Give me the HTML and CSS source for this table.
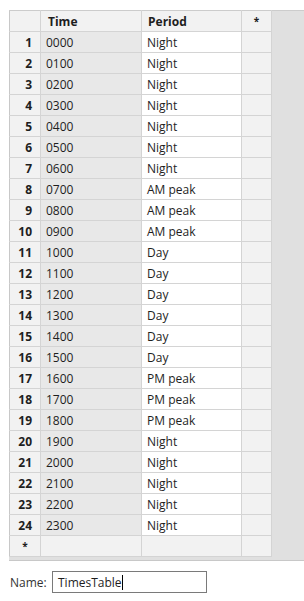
FILE: index.html
```html
<!DOCTYPE html>
<html lang="en">
<head>
	<meta charset="UTF-8">
	<title>Times</title>
	<link rel="stylesheet" href="styles.css">
</head>
<body>
<div class="grid-area">
	<table class="grid">
		<thead>
			<tr>
				<th class="rowhead"></th>
				<th class="col-time">Time</th>
				<th class="col-period">Period</th>
				<th class="col-new">*</th>
			</tr>
		</thead>
		<tbody id="rows">
		</tbody>
	</table>
</div>
<div class="name-row">
	<label for="name">Name:</label>
	<div class="name-box"><span class="name-text">TimesTable</span><span class="caret"></span></div>
</div>
<script>
	//每小时对应的时段
	var periods = ["Night","Night","Night","Night","Night","Night","Night",
		"AM peak","AM peak","AM peak",
		"Day","Day","Day","Day","Day","Day",
		"PM peak","PM peak","PM peak",
		"Night","Night","Night","Night","Night"];
	var tbody = document.getElementById("rows");
	var html = "";
	for (var i = 0; i < periods.length; i++) {
		var hour = (i < 10 ? "0" : "") + i + "00";
		html += "<tr><td class='rowhead'>" + (i + 1) + "</td>" +
			"<td class='time'>" + hour + "</td>" +
			"<td class='period'>" + periods[i] + "</td>" +
			"<td class='extra'></td></tr>";
	}
	//最后一行是新增行
	html += "<tr class='new-row'><td class='rowhead'>*</td><td class='time'></td><td class='period'></td><td class='extra'></td></tr>";
	tbody.innerHTML = html;
</script>
</body>
</html>
```

FILE: styles.css
```css
*{
	margin: 0;
	padding: 0;
	box-sizing: border-box;
}
body{
	font-family: "Open Sans", "Noto Sans", sans-serif;
	font-size: 12px;
	color: #1e1e1e;
	background: #ffffff;
}
/* 表格后面的灰色区域，顶部一条线 */
.grid-area{
	margin: 10px 0 0 9px;
	background: linear-gradient(#cccccc, #cccccc) top left / 100% 1px no-repeat, #e0e0e0;
	border-bottom: 1px solid #c8c8c8;
	padding-bottom: 3px;
}
.grid{
	border-collapse: collapse;
	table-layout: fixed;
	width: 263px;
}
.grid th,
.grid td{
	height: 21px;
	border: 1px solid #d4d4d4;
	padding: 0 5px;
	text-align: left;
	white-space: nowrap;
	line-height: 19px;
}
.grid tr:first-child th{
	border-top-color: #cccccc;
}
.grid th{
	background: #f2f2f2;
	font-weight: bold;
}
.grid .rowhead{
	width: 31px;
	background: #f2f2f2;
	font-weight: bold;
	text-align: right;
	padding-right: 8px;
	border-left-color: #c8c8c8;
}
.grid .col-time{
	width: 101px;
	padding-left: 7px;
}
.grid .col-period{
	width: 100px;
	padding-left: 6px;
}
.grid .col-new{
	width: 30px;
	text-align: center;
	font-size: 10px;
}
.grid td.time{
	background: #e8e8e8;
}
.grid td.period{
	background: #ffffff;
}
.grid td.extra{
	background: #f2f2f2;
}
.grid .new-row td{
	background: #f2f2f2;
}
.grid .new-row .rowhead{
	text-align: center;
	padding: 0;
	font-size: 10px;
}
.name-row{
	display: flex;
	align-items: center;
	margin: 10px 0 0 10px;
}
.name-row label{
	color: #333333;
	width: 42px;
}
.name-box{
	width: 155px;
	height: 22px;
	border: 1px solid #7a7a7a;
	padding-left: 5px;
	display: flex;
	align-items: center;
}
.caret{
	width: 1px;
	height: 15px;
	background: #000000;
}
```
